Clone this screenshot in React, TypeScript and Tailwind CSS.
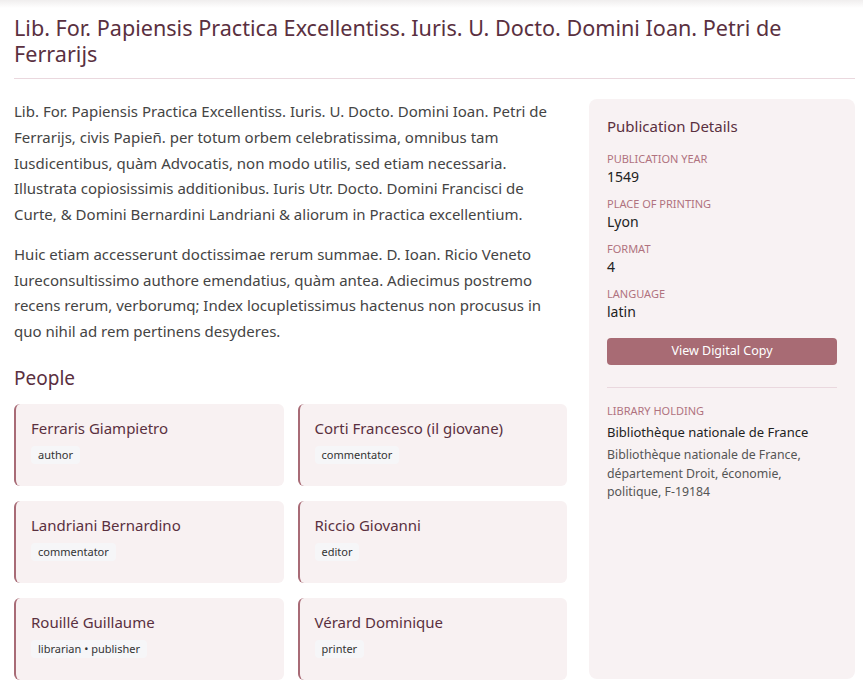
const people = [
  { name: "Ferraris Giampietro", role: "author" },
  { name: "Corti Francesco (il giovane)", role: "commentator" },
  { name: "Landriani Bernardino", role: "commentator" },
  { name: "Riccio Giovanni", role: "editor" },
  { name: "Rouillé Guillaume", role: "librarian • publisher" },
  { name: "Vérard Dominique", role: "printer" },
];

const details = [
  { label: "Publication Year", value: "1549" },
  { label: "Place of Printing", value: "Lyon" },
  { label: "Format", value: "4" },
  { label: "Language", value: "latin" },
];

const PersonCard = ({ name, role }: { name: string; role: string }) => (
  <div className="h-[82px] rounded-md border-l-2 border-[#a86b76] bg-[#f8f1f2] pl-[15px] pt-[14px]">
    <div className="text-[15px] leading-5 text-[#5a3040]">{name}</div>
    <span className="mt-[8px] inline-block rounded bg-[#f6f6f8] px-[7px] py-[2px] text-[11px] leading-[14px] text-[#333]">
      {role}
    </span>
  </div>
);

const App = () => {
  return (
    <div className="min-h-[691px] w-[863px] bg-white font-['Noto_Sans',sans-serif]">
      <div className="h-2 bg-gradient-to-b from-[#f0eeee] to-white" />
      <div className="pl-[14px] pr-2">
        <h1 className="border-b border-[#ead8de] pb-[11px] pt-[7px] text-[21.6px] leading-[26px] text-[#5a3040]">
          Lib. For. Papiensis Practica Excellentiss. Iuris. U. Docto. Domini Ioan. Petri de Ferrarijs
        </h1>

        <div className="mt-[20px] flex gap-[22px]">
          <div className="w-[553px] shrink-0">
            <p className="mb-[14px] text-[15px] leading-[25.75px] text-[#444]">
              Lib. For. Papiensis Practica Excellentiss. Iuris. U. Docto. Domini Ioan. Petri de Ferrarijs, civis
              Papieñ. per totum orbem celebratissima, omnibus tam Iusdicentibus, quàm Advocatis, non modo utilis,
              sed etiam necessaria. Illustrata copiosissimis additionibus. Iuris Utr. Docto. Domini Francisci de
              Curte, &amp; Domini Bernardini Landriani &amp; aliorum in Practica excellentium.
            </p>
            <p className="text-[15px] leading-[25.75px] text-[#444]">
              Huic etiam accesserunt doctissimae rerum summae. D. Ioan. Ricio Veneto Iureconsultissimo authore
              emendatius, quàm antea. Adiecimus postremo recens rerum, verborumq; Index locupletissimus hactenus non
              procusus in quo nihil ad rem pertinens desyderes.
            </p>

            <h2 className="mb-[13px] mt-[20px] text-[19px] leading-[26px] text-[#5a3040]">People</h2>
            <div className="grid grid-cols-2 gap-x-[14px] gap-y-[15px]">
              {people.map((p) => (
                <PersonCard key={p.name} name={p.name} role={p.role} />
              ))}
            </div>
          </div>

          <aside className="h-[580px] w-[266px] rounded-lg bg-[#f8f2f3] px-[18px] pt-[17px]">
            <h3 className="mb-[15px] text-[15px] leading-5 text-[#5a3040]">Publication Details</h3>
            <div className="flex flex-col gap-[9px]">
              {details.map((d) => (
                <div key={d.label}>
                  <div className="text-[11px] uppercase leading-4 text-[#b0727f]">{d.label}</div>
                  <div className="text-[14px] leading-5 text-[#222]">{d.value}</div>
                </div>
              ))}
            </div>
            <button className="mt-[16px] h-[27px] w-full rounded bg-[#a86b74] text-[12.5px] text-white">
              View Digital Copy
            </button>
            <div className="mt-[22px] border-t border-[#ead8de] pt-[15px]">
              <div className="text-[11px] uppercase leading-4 text-[#b0727f]">Library Holding</div>
              <div className="mt-[4px] text-[13px] leading-[18px] text-[#222]">Bibliothèque nationale de France</div>
              <div className="mt-[5px] text-[12.3px] leading-[18.5px] text-[#555]">
                Bibliothèque nationale de France, département Droit, économie, politique, F-19184
              </div>
            </div>
          </aside>
        </div>
      </div>
    </div>
  );
};

export default App;
